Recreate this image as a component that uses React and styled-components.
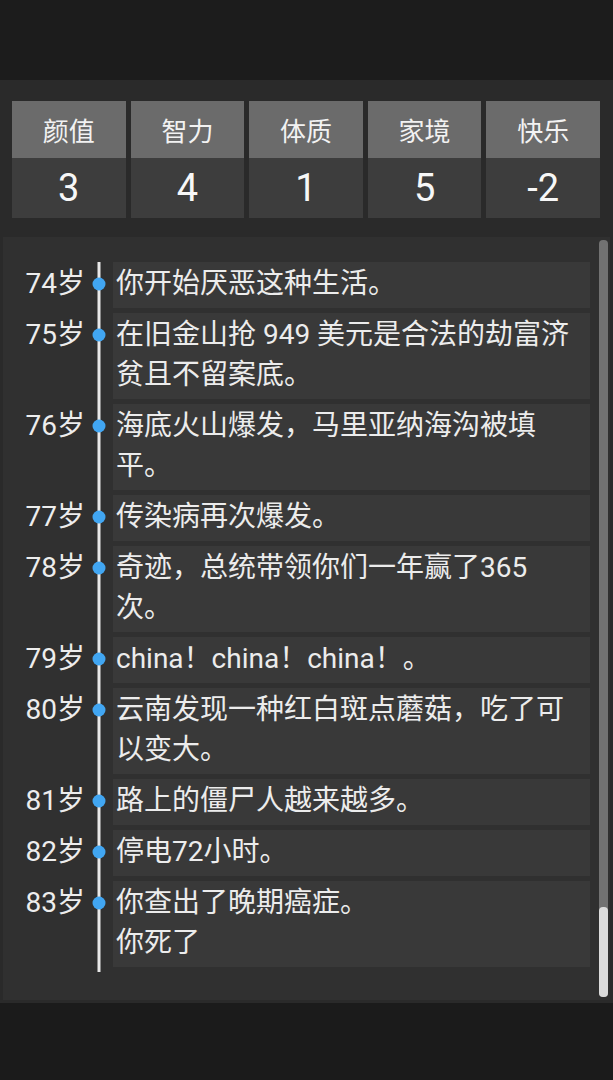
import React from "react";
import styled, { createGlobalStyle } from "styled-components";

const GlobalStyle = createGlobalStyle`
  html, body {
    margin: 0;
    padding: 0;
    background: #1b1b1b;
  }
  body {
    font-family: Roboto, "Noto Sans CJK SC", "Noto Sans", sans-serif;
    color: #ececec;
  }
  * { box-sizing: border-box; }
`;

const Page = styled.div`
  display: flex;
  flex-direction: column;
  min-height: 100vh;
  background: #1b1b1b;
`;

const TopBar = styled.div`
  height: 80px;
  background: #1c1c1c;
`;

const MainPanel = styled.main`
  background: #2a2a2a;
  padding: 21px 0 3px;
  display: flex;
  flex-direction: column;
`;

const StatsGrid = styled.div`
  display: grid;
  grid-template-columns: repeat(5, 1fr);
  gap: 5px;
  margin: 0 13px 0 12px;
`;

const StatCard = styled.div`
  display: flex;
  flex-direction: column;
`;

const StatHeader = styled.div`
  height: 57px;
  background: #6b6b6b;
  display: flex;
  align-items: center;
  justify-content: center;
  font-size: 26px;
  color: #f2f2f2;
`;

const StatValue = styled.div`
  height: 60px;
  background: #3d3d3d;
  display: flex;
  align-items: center;
  justify-content: center;
  font-size: 38px;
  color: #f7f7f7;
`;

const ListPanel = styled.section`
  margin: 19px 3px 0;
  height: 763px;
  background: #303030;
  display: flex;
  overflow: hidden;
`;

const Timeline = styled.div`
  flex: 1;
  padding-top: 25px;
  display: flex;
  flex-direction: column;
`;

const Row = styled.div`
  display: grid;
  grid-template-columns: 82px 28px 1fr;
`;

const Age = styled.div`
  text-align: right;
  padding: 2px 0 0 0;
  font-size: 28px;
  line-height: 40px;
  color: #ededed;
  white-space: nowrap;
`;

const Marker = styled.div`
  position: relative;
  &::before {
    content: "";
    position: absolute;
    left: 50%;
    top: 0;
    bottom: 0;
    width: 3px;
    transform: translateX(-50%);
    background: #e8e8e8;
  }
`;

const Dot = styled.span`
  position: absolute;
  left: 50%;
  top: 22px;
  width: 13px;
  height: 13px;
  border-radius: 50%;
  background: #41a6f2;
  transform: translate(-50%, -50%);
`;

const EventBox = styled.div`
  background: #393939;
  margin: 0 9px 5px 0;
  padding: 2px 10px 4px 3px;
  font-size: 28px;
  line-height: 40px;
  color: #ececec;
  line-break: strict;
`;

const ScrollTrack = styled.div`
  width: 9px;
  margin: 3px 2px 3px 0;
  background: #727272;
  border-radius: 4px;
  display: flex;
  flex-direction: column;
  justify-content: flex-end;
`;

const ScrollThumb = styled.div`
  height: 90px;
  background: #dcdcdc;
  border-radius: 4px;
`;

const stats = [
  { label: "颜值", value: "3" },
  { label: "智力", value: "4" },
  { label: "体质", value: "1" },
  { label: "家境", value: "5" },
  { label: "快乐", value: "-2" },
];

const events = [
  { age: 74, lines: ["你开始厌恶这种生活。"] },
  { age: 75, lines: ["在旧金山抢 949 美元是合法的劫富济贫且不留案底。"] },
  { age: 76, lines: ["海底火山爆发，马里亚纳海沟被填平。"] },
  { age: 77, lines: ["传染病再次爆发。"] },
  { age: 78, lines: ["奇迹，总统带领你们一年赢了365次。"] },
  { age: 79, lines: ["china！china！china！。"] },
  { age: 80, lines: ["云南发现一种红白斑点蘑菇，吃了可以变大。"] },
  { age: 81, lines: ["路上的僵尸人越来越多。"] },
  { age: 82, lines: ["停电72小时。"] },
  { age: 83, lines: ["你查出了晚期癌症。", "你死了"] },
];

export default function App() {
  return (
    <>
      <GlobalStyle />
      <Page>
        <TopBar />
        <MainPanel>
          <StatsGrid>
            {stats.map((s) => (
              <StatCard key={s.label}>
                <StatHeader>{s.label}</StatHeader>
                <StatValue>{s.value}</StatValue>
              </StatCard>
            ))}
          </StatsGrid>
          <ListPanel>
            <Timeline>
              {events.map((e) => (
                <Row key={e.age}>
                  <Age>{e.age}岁</Age>
                  <Marker>
                    <Dot />
                  </Marker>
                  <EventBox>
                    {e.lines.map((l, i) => (
                      <div key={i}>{l}</div>
                    ))}
                  </EventBox>
                </Row>
              ))}
            </Timeline>
            <ScrollTrack>
              <ScrollThumb />
            </ScrollTrack>
          </ListPanel>
        </MainPanel>
      </Page>
    </>
  );
}
